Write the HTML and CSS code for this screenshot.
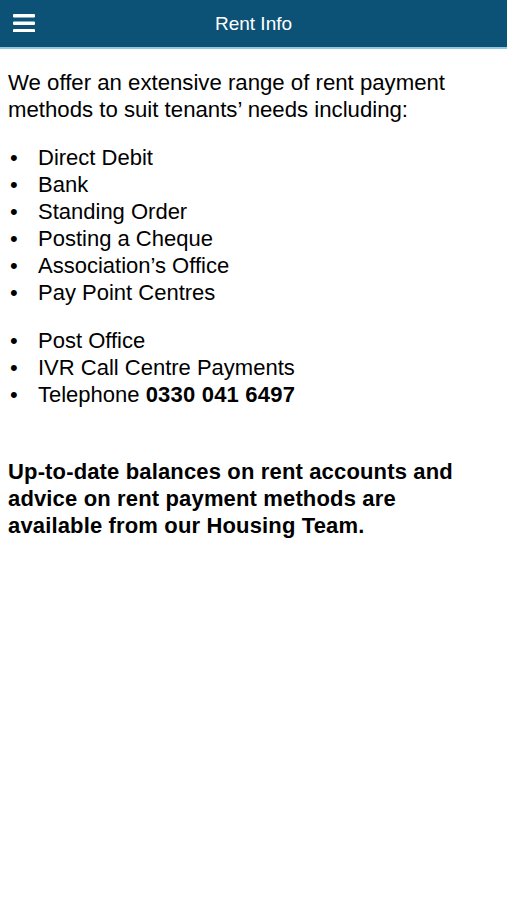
FILE: index.html
```html
<!DOCTYPE html>
<html>

<head>
  <title>Rent Info</title>
  <link rel="stylesheet" href="styles.css">
</head>

<body>
  <div class="topbar">
    <button class="menu-btn">
      <svg width="22" height="18" viewBox="0 0 22 18">
        <rect x="0" y="0" width="22" height="3.5" rx="1" fill="#fff" />
        <rect x="0" y="7.5" width="22" height="3.5" rx="1" fill="#fff" />
        <rect x="0" y="15" width="22" height="3.5" rx="1" fill="#fff" />
      </svg>
    </button>
    <h1 class="title">Rent Info</h1>
  </div>

  <div class="content">
    <p class="intro">We offer an extensive range of rent payment methods to suit tenants’ needs including:</p>
    <ul class="methods">
      <li>Direct Debit</li>
      <li>Bank</li>
      <li>Standing Order</li>
      <li>Posting a Cheque</li>
      <li>Association’s Office</li>
      <li>Pay Point Centres</li>
    </ul>
    <ul class="methods">
      <li>Post Office</li>
      <li>IVR Call Centre Payments</li>
      <li>Telephone <b>0330 041 6497</b></li>
    </ul>
    <p class="note"><b>Up-to-date balances on rent accounts and advice on rent payment methods are available from our Housing Team.</b></p>
  </div>
</body>

</html>
```

FILE: styles.css
```css
body {
  margin: 0;
  font-family: "Liberation Sans", Arial, Helvetica, sans-serif;
  background: #fff;
  color: #000;
}

.topbar {
  position: relative;
  height: 47px;
  background: #0b5276;
  border-bottom: 2px solid #8fc8e0;
  display: flex;
  align-items: center;
  justify-content: center;
}

.menu-btn {
  position: absolute;
  left: 13px;
  top: 14px;
  padding: 0;
  border: 0;
  background: transparent;
  line-height: 0;
}

.title {
  margin: 0;
  color: #fff;
  font-size: 19px;
  font-weight: normal;
}

.content {
  padding: 0 30px 0 8px;
  font-size: 22px;
  line-height: 27px;
}

.content p {
  margin: 20px 0 21px;
}

.intro {
  font-size: 22.2px;
}

.methods {
  margin: 0 0 21px;
  padding: 0;
  list-style: none;
}

.methods li {
  padding-left: 30px;
}

.methods li::before {
  content: "•";
  display: inline-block;
  width: 30px;
  margin-left: -30px;
  text-indent: 2px;
}

.methods b {
  letter-spacing: 0.2px;
}

.note {
  padding-top: 29px;
  letter-spacing: 0.15px;
}
```
